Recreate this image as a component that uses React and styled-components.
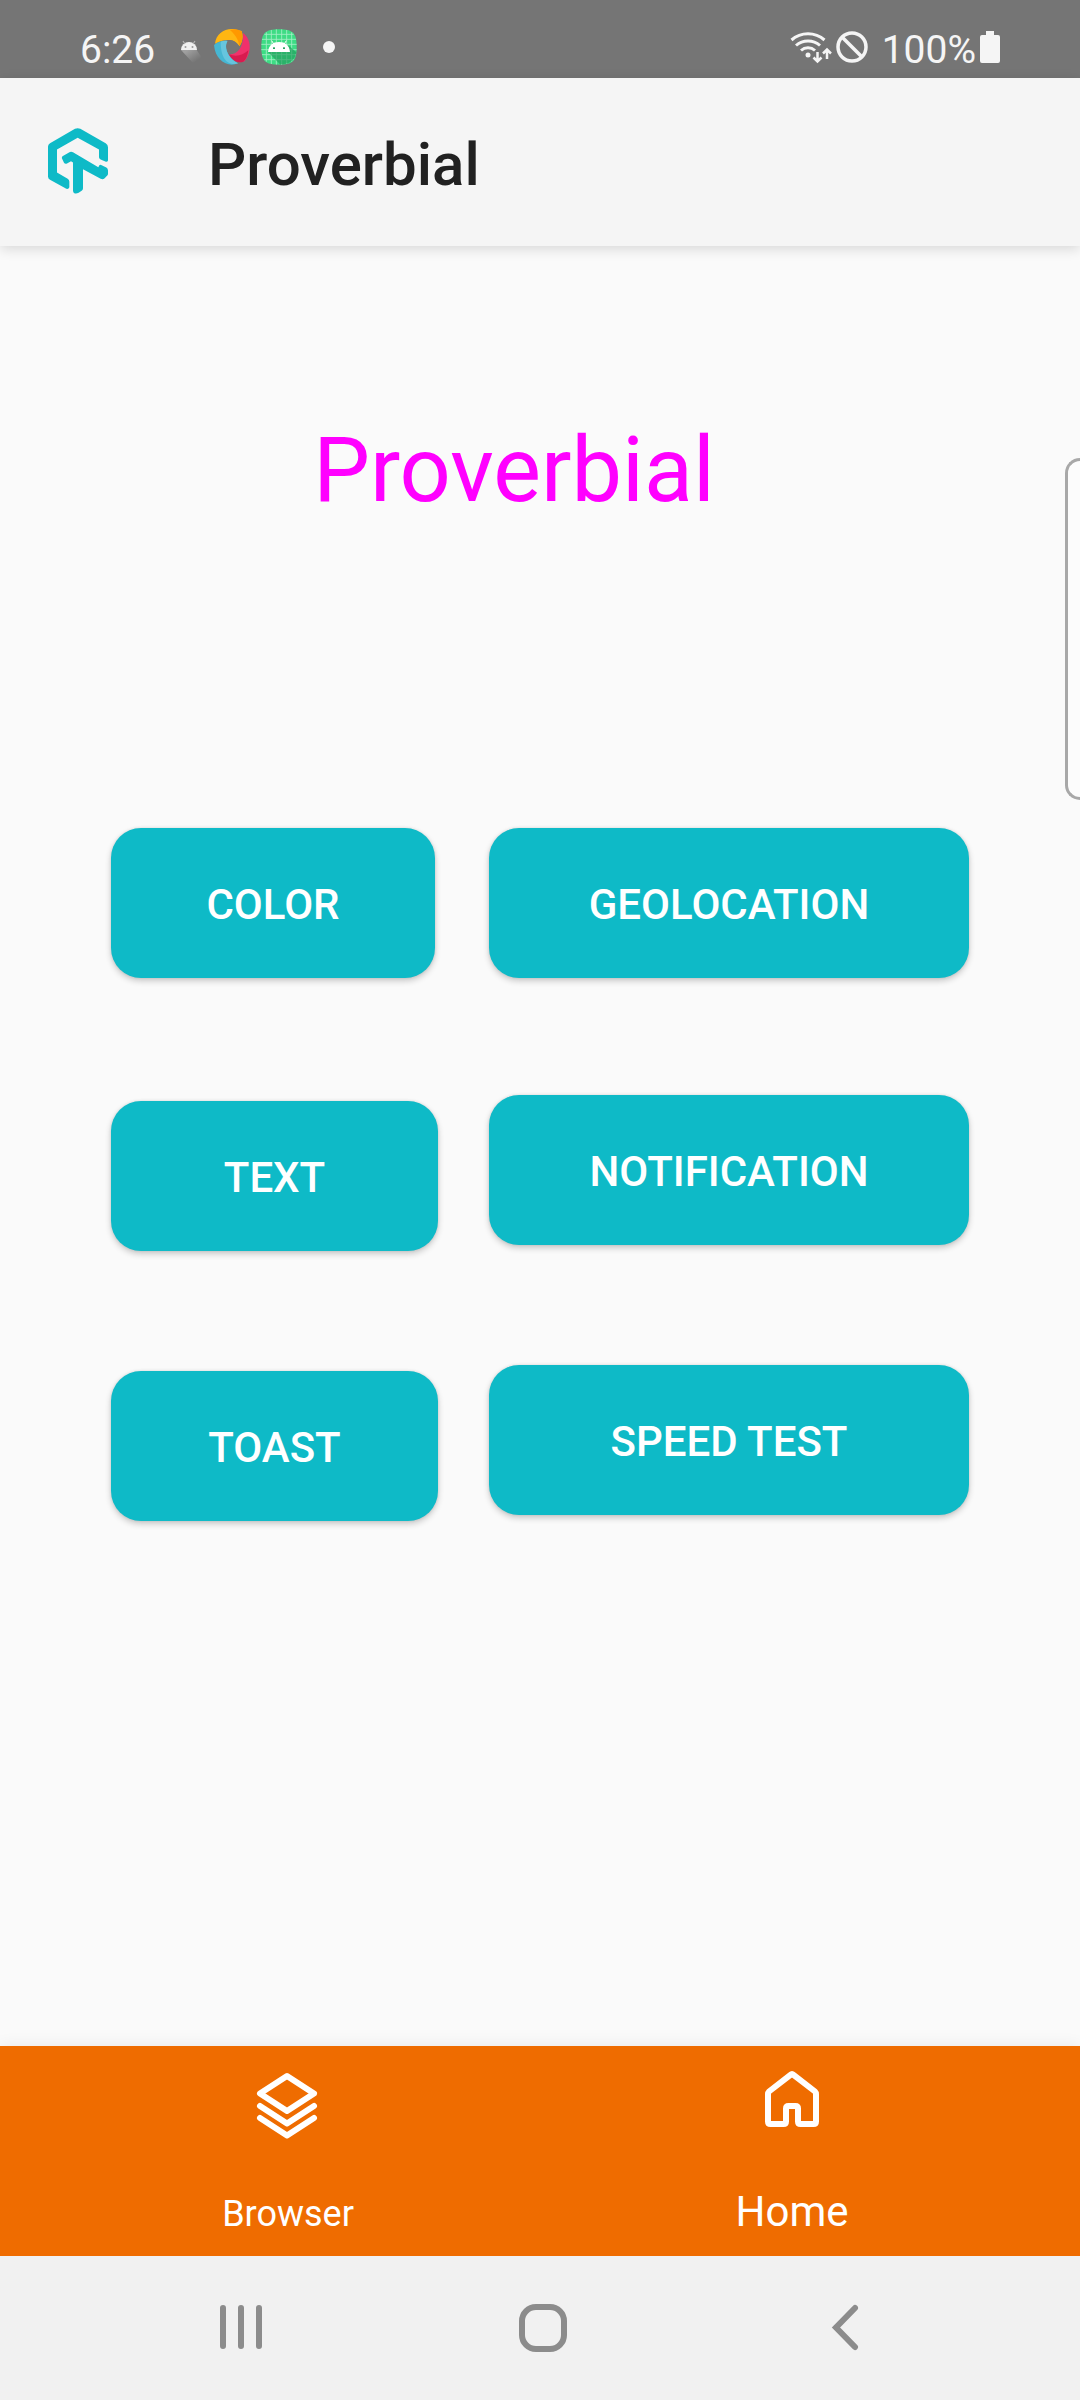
import React from "react";
import styled, { createGlobalStyle } from "styled-components";

const GlobalStyle = createGlobalStyle`
  *, *::before, *::after { box-sizing: border-box; }
  body {
    margin: 0;
    background: #fafafa;
    font-family: Roboto, "Liberation Sans", sans-serif;
  }
  button { font-family: inherit; border: 0; cursor: pointer; }
`;

const Screen = styled.div`
  position: relative;
  display: flex;
  flex-direction: column;
  min-height: 100vh;
  overflow: hidden;
`;

const StatusBar = styled.div`
  display: flex;
  align-items: center;
  justify-content: space-between;
  height: 78px;
  padding: 16px 80px 0 80px;
  background: #757575;
  color: #f5f5f5;
`;

const StatusGroup = styled.div`
  display: flex;
  align-items: center;
  gap: ${(p) => p.$gap}px;
`;

const StatusText = styled.span`
  padding-top: 6px;
  font-size: 39px;
  line-height: 36px;
`;

const StatusIcons = styled.div`
  display: flex;
  align-items: center;
  gap: 11px;
`;

const AppBar = styled.header`
  display: flex;
  align-items: center;
  gap: 100px;
  height: 168px;
  padding: 0 48px 3px;
  background: #f5f5f5;
  box-shadow: 0 3px 12px rgba(0, 0, 0, 0.14);
`;

const AppTitle = styled.h1`
  margin: 0;
  padding-top: 9px;
  color: #212121;
  font-size: 60px;
  font-weight: 500;
  line-height: 70px;
`;

const Content = styled.main`
  flex: 1;
  padding: 172px 111px 120px;
`;

const Headline = styled.h2`
  margin: 0;
  padding-right: 52px;
  color: #ff00ff;
  font-size: 90px;
  font-weight: 400;
  line-height: 106px;
  text-align: center;
`;

const Actions = styled.div`
  display: grid;
  grid-template-columns: 327fr 480fr;
  align-items: start;
  column-gap: 51px;
  margin-top: 304px;
`;

const ActionColumn = styled.div`
  display: grid;
  grid-template-rows: 150px ${(p) => p.$firstGap}px 150px 120px 150px;

  > :nth-child(2) { grid-row: 3; }
  > :nth-child(3) { grid-row: 5; }
`;

const ActionButton = styled.button`
  width: 100%;
  max-width: ${(p) => p.$maxWidth || "none"};
  padding: 4px 0 0;
  border-radius: 30px;
  background: #0ebac7;
  color: #ffffff;
  font-size: 42px;
  font-weight: 500;
  line-height: 50px;
  text-transform: uppercase;
  box-shadow: 0 3px 6px rgba(0, 0, 0, 0.2), 0 0 3px rgba(0, 0, 0, 0.1);
`;

const EdgeHandle = styled.div`
  position: absolute;
  top: 458px;
  right: 0;
  width: 15px;
  height: 342px;
  border: 3px solid #a8a8a8;
  border-right: 0;
  border-radius: 15px 0 0 15px;
  background: #fcfcfc;
`;

const TabBar = styled.nav`
  display: grid;
  grid-template-columns: 1fr 1fr;
  height: 210px;
  padding: 0 36px;
  background: #ef6c00;
  box-shadow: 0 0 15px rgba(0, 0, 0, 0.08);
`;

const Tab = styled.button`
  display: flex;
  flex-direction: column;
  align-items: center;
  justify-content: space-between;
  padding: ${(p) => (p.$active ? 18 : 24)}px 0 19px;
  background: none;
  color: #ffffff;
  font-size: ${(p) => (p.$active ? 42 : 36)}px;
  line-height: ${(p) => (p.$active ? 50 : 46)}px;
`;

const SystemBar = styled.nav`
  display: grid;
  grid-template-columns: repeat(3, 1fr);
  height: 144px;
  padding: 0 84px 0 90px;
  background: #f1f1f1;
`;

const SystemButton = styled.button`
  display: flex;
  align-items: center;
  justify-content: center;
  padding: 0;
  background: none;
  color: #8c8c8c;
`;

const Logo = () => (
  <svg width="60" height="66" viewBox="144 173 180 197" fill="#0ebac7" aria-hidden="true">
    <path d="M144 228Q144 222 150 218L225 175Q233 171 241 175L317 218Q324 222 324 230V270Q322 275 316 273L302 267Q297 264 297 260V237L233 202L171 237V306L203 325Q208 328 208 333V350Q206 357 199 355L150 328Q144 325 144 318Z" />
    <path d="M186 264Q184 259 190 256L207 246Q212 242 219 245L295 290L298 284Q301 282 305 284L319 291Q324 294 324 300V310Q324 314 321 316L314 323Q309 328 302 325L249 296V353Q249 357 246 360L236 367Q228 371 223 368Q219 366 219 360V276L213 272L201 279Q195 281 192 277Z" />
  </svg>
);

const DebugIcon = () => (
  <svg width="22" height="36" viewBox="4 0 22 36" aria-hidden="true">
    <defs>
      <linearGradient id="debugShade" x1="0" y1="0" x2="1" y2="1">
        <stop offset="0.2" stopColor="#a0a0a0" />
        <stop offset="0.8" stopColor="#757575" />
      </linearGradient>
    </defs>
    <path d="M4 21L16 34L25 29L19 20Z" fill="url(#debugShade)" />
    <path d="M4 21a8 8 0 0 1 16 0Z" fill="#f0f0f0" />
    <path d="M6 12l2 3M18 12l-2 3" stroke="#b5b5b5" strokeWidth="1.2" />
    <circle cx="8.500" cy="18" r="1" fill="#999" />
    <circle cx="15.500" cy="18" r="1" fill="#999" />
  </svg>
);

const SwirlIcon = () => (
  <svg width="36" height="36" viewBox="0 0 108 108" aria-hidden="true">
    <path d="M3 44C6 14 34-4 62 1L83 6C88 22 86 38 76 52C66 34 44 24 3 44Z" fill="#ffb612" />
    <path d="M48 3C66-3 76 3 83 7C88 24 86 38 76 52C74 34 66 20 48 3Z" fill="#ff9800" />
    <path d="M87 12C112 30 114 68 92 97C70 105 52 92 45 76C68 78 90 58 87 12Z" fill="#f0316b" />
    <path d="M103 64C100 82 96 92 88 98C68 104 52 92 45 76C66 84 86 80 103 64Z" fill="#d81b4f" />
    <path d="M0 48C12 38 28 34 41 36C28 54 42 88 72 103C42 116 4 96 0 48Z" fill="#46b6d2" />
    <path d="M20 38Q30 34 41 36C28 54 42 88 72 103C50 110 20 100 20 38Z" fill="#66c5de" />
    <path d="M41 36Q58 28 72 48L76 52Q66 70 45 76Q34 56 41 36Z" fill="#757575" />
  </svg>
);

const AndroidIcon = () => (
  <svg width="36" height="36" viewBox="0 0 108 108" aria-hidden="true">
    <path d="M54 1C96 1 107 12 107 54S96 107 54 107S1 96 1 54S12 1 54 1Z" fill="#3ddc84" />
    <path d="M16 10V98M31 3V105M46 1V107M62 1V107M77 3V105M92 10V98M10 16H98M3 31H105M1 46H107M1 62H107M3 77H105M10 92H98" stroke="#a4efc6" strokeWidth="2.500" />
    <path d="M21 69L57 106Q98 108 106 70L84 50Z" fill="#219b5b" opacity="0.65" />
    <path d="M21 69C23 49 35 39 54 39S85 49 87 69Z" fill="#fff" />
    <path d="M32 35L39 46M76 35L69 46" stroke="#fff" strokeWidth="3" />
    <rect x="36" y="55" width="6" height="5" fill="#27a564" />
    <rect x="66" y="55" width="6" height="5" fill="#27a564" />
  </svg>
);

const DotIcon = () => (
  <svg width="12" height="12" viewBox="0 0 12 12" aria-hidden="true">
    <circle cx="6" cy="6" r="6" fill="#f5f5f5" />
  </svg>
);

const WifiIcon = () => (
  <svg width="42" height="36" viewBox="0 0 42 36" fill="none" stroke="#f5f5f5" aria-hidden="true">
    <path d="M1.500 11A25 25 0 0 1 34.500 11M6 16.500A18 18 0 0 1 30 16.500M11 21.500A10.500 10.500 0 0 1 25 21.500" strokeWidth="3" />
    <circle cx="18" cy="26" r="2.500" fill="#f5f5f5" stroke="none" />
    <path d="M27.500 23V32M23.500 28.500L27.500 32.500L31.500 28.500M37 30V21M33 24.500L37 20.500L41 24.500" strokeWidth="2.500" />
  </svg>
);

const BlockedIcon = () => (
  <svg width="32" height="36" viewBox="0 0 32 36" fill="none" stroke="#f5f5f5" strokeWidth="3.500" aria-hidden="true">
    <circle cx="16" cy="18" r="14" />
    <path d="M6 8L26 28" />
  </svg>
);

const BatteryIcon = () => (
  <svg width="20" height="36" viewBox="0 0 20 36" fill="#f5f5f5" aria-hidden="true">
    <path d="M6 2H14V6H18Q20 6 20 8V32Q20 34 18 34H2Q0 34 0 32V8Q0 6 2 6H6Z" />
  </svg>
);

const LayersIcon = () => (
  <svg width="72" height="72" viewBox="0 0 72 72" fill="none" stroke="currentColor" strokeWidth="6" strokeLinecap="round" strokeLinejoin="round" aria-hidden="true">
    <path d="M35 6L62 23.500L35 41L8 23.500Z" />
    <path d="M8 36L35 53.500L62 36" />
    <path d="M8 48L35 65.500L62 48" />
  </svg>
);

const HomeIcon = () => (
  <svg width="72" height="72" viewBox="0 0 72 72" fill="none" stroke="currentColor" strokeWidth="6" strokeLinejoin="round" aria-hidden="true">
    <path d="M34.500 10.800Q36 9.500 37.500 10.800L59 27.500Q60 28.500 60 30V57.500Q60 60 57.500 60H44.500Q42 60 42 57.500V44.500Q42 42 39.500 42H32.500Q30 42 30 44.500V57.500Q30 60 27.500 60H14.500Q12 60 12 57.500V30Q12 28.500 13 27.500Z" />
  </svg>
);

const RecentsIcon = () => (
  <svg width="48" height="48" viewBox="0 0 48 48" stroke="currentColor" strokeWidth="6" strokeLinecap="round" aria-hidden="true">
    <path d="M6 4V42M24 4V42M42 4V42" />
  </svg>
);

const SystemHomeIcon = () => (
  <svg width="48" height="48" viewBox="0 0 48 48" fill="none" stroke="currentColor" strokeWidth="6" aria-hidden="true">
    <rect x="3" y="3" width="42" height="42" rx="14" />
  </svg>
);

const BackIcon = () => (
  <svg width="48" height="48" viewBox="0 0 48 48" fill="none" stroke="currentColor" strokeWidth="6" strokeLinecap="round" aria-hidden="true">
    <path d="M34 4L15 23.500L34 43" />
  </svg>
);

export default function App() {
  return (
    <>
      <GlobalStyle />
      <Screen>
        <StatusBar>
          <StatusGroup $gap={26}>
            <StatusText>6:26</StatusText>
            <StatusIcons>
              <DebugIcon />
              <SwirlIcon />
              <AndroidIcon />
            </StatusIcons>
            <DotIcon />
          </StatusGroup>
          <StatusGroup $gap={4}>
            <WifiIcon />
            <BlockedIcon />
            <StatusText>&nbsp;100%</StatusText>
            <BatteryIcon />
          </StatusGroup>
        </StatusBar>
        <AppBar>
          <Logo />
          <AppTitle>Proverbial</AppTitle>
        </AppBar>
        <Content>
          <Headline>Proverbial</Headline>
          <Actions>
            <ActionColumn $firstGap={123}>
              <ActionButton type="button" $maxWidth="324px">Color</ActionButton>
              <ActionButton type="button">Text</ActionButton>
              <ActionButton type="button">Toast</ActionButton>
            </ActionColumn>
            <ActionColumn $firstGap={117}>
              <ActionButton type="button">Geolocation</ActionButton>
              <ActionButton type="button">Notification</ActionButton>
              <ActionButton type="button">Speed Test</ActionButton>
            </ActionColumn>
          </Actions>
        </Content>
        <TabBar>
          <Tab type="button">
            <LayersIcon />
            Browser
          </Tab>
          <Tab type="button" $active aria-current="page">
            <HomeIcon />
            Home
          </Tab>
        </TabBar>
        <SystemBar>
          <SystemButton type="button" aria-label="Recent apps"><RecentsIcon /></SystemButton>
          <SystemButton type="button" aria-label="Home screen"><SystemHomeIcon /></SystemButton>
          <SystemButton type="button" aria-label="Back"><BackIcon /></SystemButton>
        </SystemBar>
        <EdgeHandle />
      </Screen>
    </>
  );
}
